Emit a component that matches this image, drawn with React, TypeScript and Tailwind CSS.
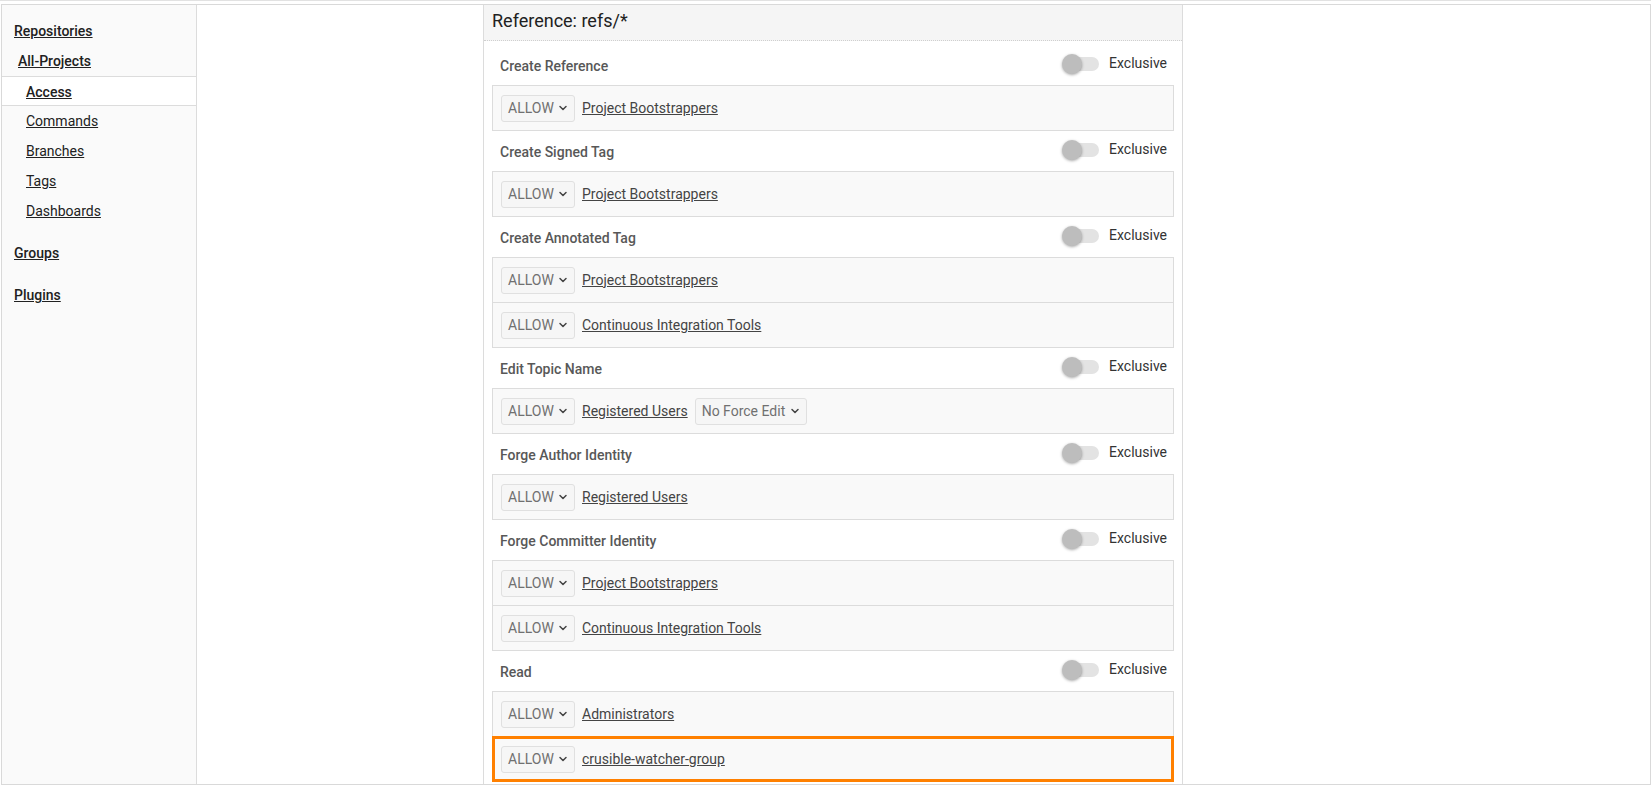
import React from 'react';
import { ChevronDown } from 'lucide-react';

type Rule = { group: string; extra?: string; highlight?: boolean };
type Section = { title: string; rules: Rule[] };

const sections: Section[] = [
  { title: 'Create Reference', rules: [{ group: 'Project Bootstrappers' }] },
  { title: 'Create Signed Tag', rules: [{ group: 'Project Bootstrappers' }] },
  {
    title: 'Create Annotated Tag',
    rules: [{ group: 'Project Bootstrappers' }, { group: 'Continuous Integration Tools' }],
  },
  { title: 'Edit Topic Name', rules: [{ group: 'Registered Users', extra: 'No Force Edit' }] },
  { title: 'Forge Author Identity', rules: [{ group: 'Registered Users' }] },
  {
    title: 'Forge Committer Identity',
    rules: [{ group: 'Project Bootstrappers' }, { group: 'Continuous Integration Tools' }],
  },
  {
    title: 'Read',
    rules: [{ group: 'Administrators' }, { group: 'crusible-watcher-group', highlight: true }],
  },
];

const FakeSelect = ({ label, width }: { label: string; width: string }) => (
  <div
    className={`${width} h-[27px] flex items-center justify-between pl-[6px] pr-[5px] border border-[#e0e0e0] rounded-[3px] bg-[#f6f6f6] text-[14px] text-[#707070]`}
  >
    <span>{label}</span>
    <ChevronDown size={12} strokeWidth={3} className="text-[#444]" />
  </div>
);

const Toggle = () => (
  <div className="relative w-[38px] h-[20px] flex items-center">
    <div className="ml-[2px] w-[35px] h-[14px] rounded-full bg-[#e3e3e3]" />
    <div className="absolute left-0 top-0 w-[20px] h-[20px] rounded-full bg-[#bdbdbd] shadow-[0_1px_3px_rgba(0,0,0,0.35)]" />
  </div>
);

const SideLink = ({ label, indent, bold, active }: { label: string; indent: string; bold?: boolean; active?: boolean }) => (
  <div
    className={`h-[30px] leading-[29px] ${indent} ${
      active ? 'bg-white border-y border-[#dcdcdc]' : ''
    }`}
  >
    <a className={`underline text-[14px] text-[#212121] ${bold ? 'font-medium' : ''}`}>{label}</a>
  </div>
);

const App = () => {
  return (
    <div
      className="w-[1651px] h-[785px] overflow-hidden bg-white border-t border-[#e2e2e2] pt-[3px] pl-px"
      style={{ fontFamily: 'Roboto, "Liberation Sans", sans-serif' }}
    >
      <div className="h-[781px] flex border border-[#d9d9d9]">
        {/* sidebar */}
        <div className="w-[195px] shrink-0 bg-[#fafafa] border-r border-[#dcdcdc] pt-[11px]">
          <SideLink label="Repositories" indent="pl-[12px]" bold />
          <SideLink label="All-Projects" indent="pl-[16px]" bold />
          <SideLink label="Access" indent="pl-[24px]" bold active />
          <SideLink label="Commands" indent="pl-[24px]" />
          <SideLink label="Branches" indent="pl-[24px]" />
          <SideLink label="Tags" indent="pl-[24px]" />
          <SideLink label="Dashboards" indent="pl-[24px]" />
          <div className="mt-[12px]">
            <SideLink label="Groups" indent="pl-[12px]" bold />
          </div>
          <div className="mt-[12px]">
            <SideLink label="Plugins" indent="pl-[12px]" bold />
          </div>
        </div>

        {/* main */}
        <div className="flex-1">
          <div className="ml-[286px] w-[700px] h-full border-x border-[#dcdcdc]">
            <div className="h-[36px] bg-[#f5f5f5] border-b border-dotted border-[#cfcfcf] pl-[8px] flex items-center">
              <span className="text-[18px] leading-[22px] -mt-[3px] text-[#212121]">Reference: refs/*</span>
            </div>
            <div className="px-[8px] pt-[4px]">
              {sections.map(section => (
                <div key={section.title}>
                  <div className="h-[40px] flex justify-between items-start">
                    <span className="mt-[12px] ml-[8px] text-[14px] leading-[18px] font-medium text-[#585858]">
                      {section.title}
                    </span>
                    <div className="mt-[8px] mr-[7px] flex items-center gap-[9px]">
                      <Toggle />
                      <span className="text-[14px] text-[#333]">Exclusive</span>
                    </div>
                  </div>
                  <div className="border border-[#dcdcdc] bg-[#f9f9f9]">
                    {section.rules.map((rule, i) => (
                      <div
                        key={i}
                        className={`relative h-[44px] flex items-center pl-[8px] ${
                          i > 0 ? 'border-t border-[#dcdcdc] h-[45px]' : ''
                        }`}
                      >
                        <FakeSelect label="ALLOW" width="w-[74px]" />
                        <a className="ml-[7px] underline text-[14px] text-[#444]">{rule.group}</a>
                        {rule.extra && (
                          <div className="ml-[7px]">
                            <FakeSelect label={rule.extra} width="w-[112px]" />
                          </div>
                        )}
                        {rule.highlight && (
                          <div className="absolute -left-px -right-px -top-px -bottom-px border-[3px] border-[#ff8000]" />
                        )}
                      </div>
                    ))}
                  </div>
                </div>
              ))}
            </div>
          </div>
        </div>
      </div>
    </div>
  );
};

export default App;
